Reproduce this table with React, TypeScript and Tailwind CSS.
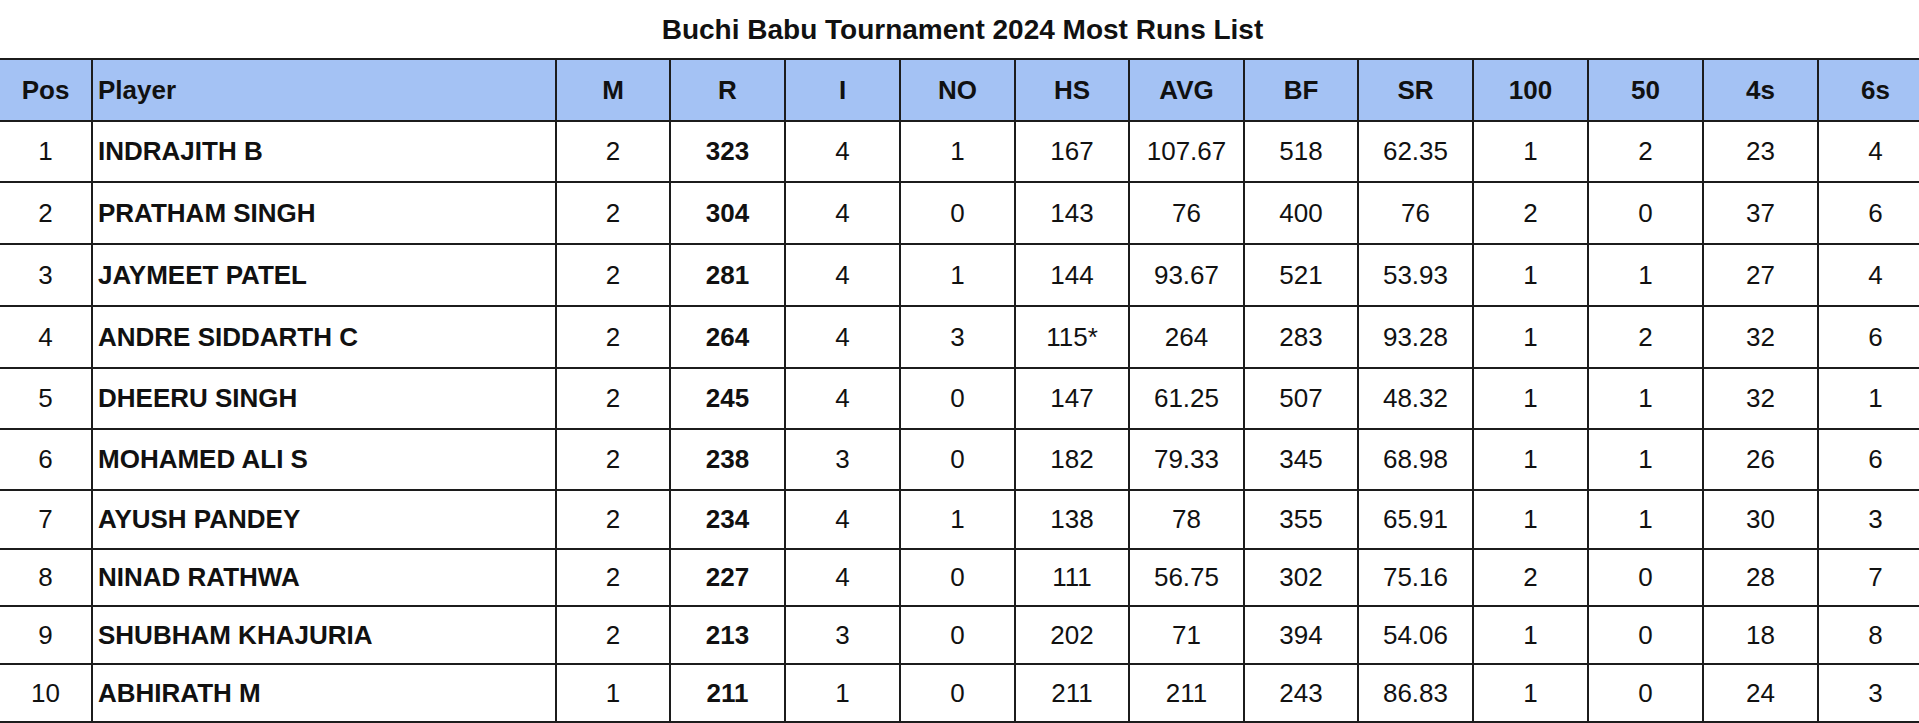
import React from "react";

const headers = ["Pos", "Player", "M", "R", "I", "NO", "HS", "AVG", "BF", "SR", "100", "50", "4s", "6s"];
const widths = [92, 464, 114, 115, 115, 115, 114, 115, 114, 115, 115, 115, 115, 115];
const rowHeights = ["h-[61px]", "h-[62px]", "h-[62px]", "h-[62px]", "h-[61px]", "h-[61px]", "h-[59px]", "h-[57px]", "h-[58px]", "h-[58px]"];

const rows: (string | number)[][] = [
  [1, "INDRAJITH B", 2, 323, 4, 1, "167", "107.67", 518, "62.35", 1, 2, 23, 4],
  [2, "PRATHAM SINGH", 2, 304, 4, 0, "143", "76", 400, "76", 2, 0, 37, 6],
  [3, "JAYMEET PATEL", 2, 281, 4, 1, "144", "93.67", 521, "53.93", 1, 1, 27, 4],
  [4, "ANDRE SIDDARTH C", 2, 264, 4, 3, "115*", "264", 283, "93.28", 1, 2, 32, 6],
  [5, "DHEERU SINGH", 2, 245, 4, 0, "147", "61.25", 507, "48.32", 1, 1, 32, 1],
  [6, "MOHAMED ALI S", 2, 238, 3, 0, "182", "79.33", 345, "68.98", 1, 1, 26, 6],
  [7, "AYUSH PANDEY", 2, 234, 4, 1, "138", "78", 355, "65.91", 1, 1, 30, 3],
  [8, "NINAD RATHWA", 2, 227, 4, 0, "111", "56.75", 302, "75.16", 2, 0, 28, 7],
  [9, "SHUBHAM KHAJURIA", 2, 213, 3, 0, "202", "71", 394, "54.06", 1, 0, 18, 8],
  [10, "ABHIRATH M", 1, 211, 1, 0, "211", "211", 243, "86.83", 1, 0, 24, 3],
];

export default function App() {
  return (
    <div
      className="w-[1919px] h-[723px] overflow-hidden bg-white text-[#111]"
      style={{ fontFamily: '"Liberation Sans", Arial, sans-serif' }}
    >
      <div className="h-[58px] flex items-center justify-center text-[28px] font-bold pl-[6px] pt-[1px]">
        Buchi Babu Tournament 2024 Most Runs List
      </div>
      <table className="table-fixed border-collapse w-[1933px]">
        <colgroup>
          {widths.map((w, i) => (
            <col key={i} style={{ width: w }} />
          ))}
        </colgroup>
        <thead>
          <tr className="h-[62px] bg-[#a4c2f4]">
            {headers.map((h, i) => (
              <th
                key={h}
                className={`border-2 border-[#1c1c1c] text-[26px] font-bold p-0 ${
                  i === 0 ? "border-l-0" : ""
                } ${i === 1 ? "text-left pl-[5px]" : "text-center"}`}
              >
                {h}
              </th>
            ))}
          </tr>
        </thead>
        <tbody>
          {rows.map((r, ri) => (
            <tr key={ri} className={rowHeights[ri]}>
              {r.map((c, i) => (
                <td
                  key={i}
                  className={`border-2 border-[#1c1c1c] text-[26px] p-0 ${
                    i === 0 ? "border-l-0" : ""
                  } ${
                    i === 1
                      ? "text-left pl-[5px] font-bold"
                      : i === 3
                      ? "text-center font-bold"
                      : "text-center"
                  }`}
                >
                  {c}
                </td>
              ))}
            </tr>
          ))}
        </tbody>
      </table>
    </div>
  );
}
